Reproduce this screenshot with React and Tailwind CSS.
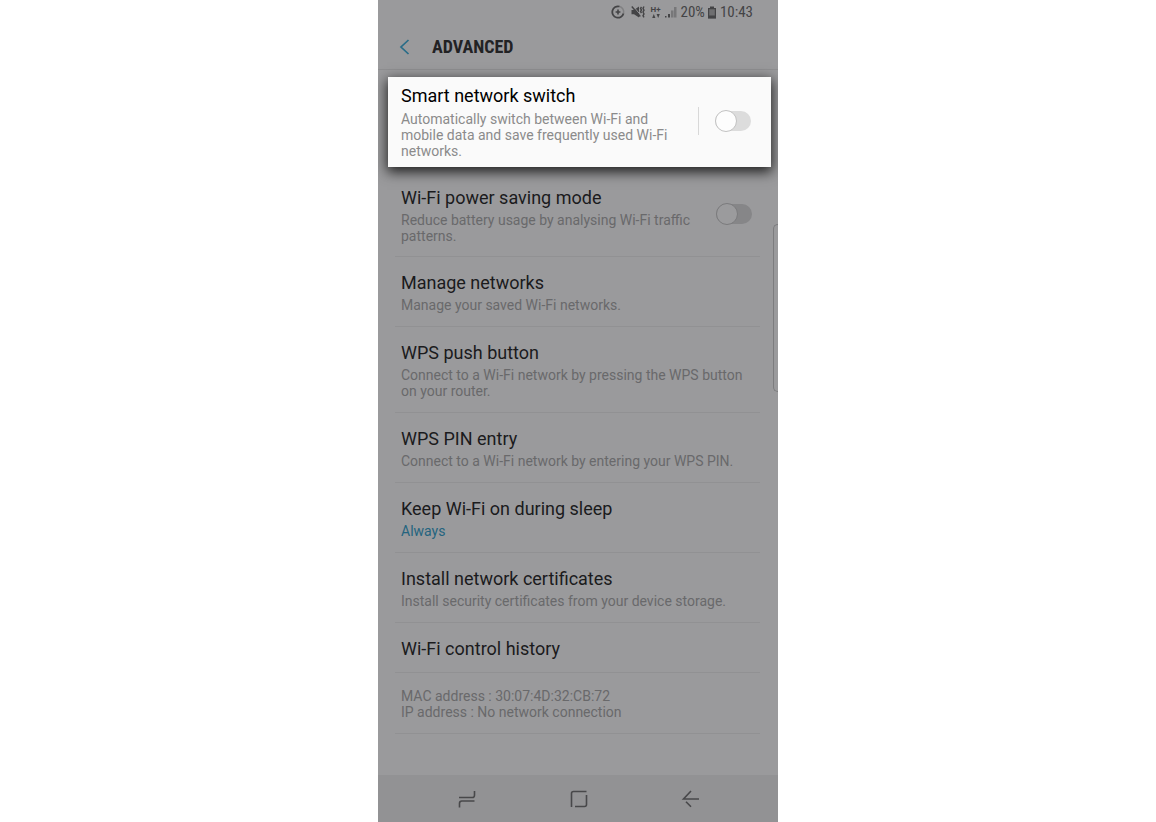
import { useState } from "react";

const settings = [
  { title: "Manage networks", text: "Manage your saved Wi-Fi networks." },
  {
    title: "WPS push button",
    text: "Connect to a Wi-Fi network by pressing the WPS button on your router.",
  },
  {
    title: "WPS PIN entry",
    text: "Connect to a Wi-Fi network by entering your WPS PIN.",
  },
  { title: "Keep Wi-Fi on during sleep", text: "Always", active: true },
  {
    title: "Install network certificates",
    text: "Install security certificates from your device storage.",
  },
  { title: "Wi-Fi control history" },
];

function StatusBar() {
  return (
    <div className="flex h-6 items-center justify-end pr-[25px] font-['Roboto_Condensed','Liberation_Sans_Narrow',Roboto,sans-serif] text-[15px] leading-6 text-[#444446]">
      <svg width="14" height="14" viewBox="0 0 14 14" fill="none" stroke="currentColor">
        <path d="M8.5 1.5A5.7 5.7 0 1 0 12.5 8.5" strokeWidth="1.8" />
        <path d="M8.5 1.5A5.7 5.7 0 0 1 12.5 8.5" strokeWidth="1.5" opacity="0.3" />
        <path d="M7 4.600v4.800M4.600 7h4.800" strokeWidth="1.6" />
      </svg>
      <svg className="ml-1.5" width="14" height="14" viewBox="0 0 14 14" fill="none" stroke="currentColor">
        <path d="M0.5 5H3L8 1.500v11L3 9.200H0.500z" fill="currentColor" stroke="none" />
        <path d="M2 1l8 9.500" stroke="#9a9a9c" strokeWidth="1" />
        <path d="M0.800 1.500l8.500 10" strokeWidth="1.4" />
        <path d="M10.500 2l-1 1.500 1 1.500-1 1.500 1 1.500M13 1.500l-1 1.800 1 1.900-1 1.800 1 1.900-1 1.800 1 1.600" strokeWidth="1.4" />
      </svg>
      <div className="ml-1.5 flex flex-col items-center gap-px font-['Roboto',sans-serif] text-[8px] leading-[7px] font-bold">
        <span>H+</span>
        <svg width="8" height="4" viewBox="0 0 8 4" fill="currentColor">
          <path d="M0.200 4L1.800 0l1.600 4zM4.600 0h3.200L6.200 4z" />
        </svg>
      </div>
      <svg className="ml-1" width="12" height="12" viewBox="0 0 12 12" fill="currentColor">
        <path d="M0 10h1.500v1.500H0zM3 8h2v3.500H3z" />
        <path d="M6 4.500h2.500v7H6zM9 1h2.500v10.500H9z" opacity="0.4" />
      </svg>
      <span className="ml-1">20%</span>
      <svg className="ml-0.5" width="10" height="13" viewBox="0 0 10 13" fill="currentColor">
        <path d="M3 0.500h4v1.500H3z" />
        <path d="M1 2h8v10.500H1z" opacity="0.5" />
        <path d="M1 2h1.200v10.500H1zM7.800 2H9v10.500H7.800zM1 2h8v1.200H1zM1 9.500h8v3H1z" />
      </svg>
      <span className="ml-[3px]">10:43</span>
    </div>
  );
}

function Toggle({ id, dim }) {
  const [on, setOn] = useState(false);
  return (
    <input
      id={id}
      type="checkbox"
      role="switch"
      checked={on}
      onChange={() => setOn(!on)}
      className={`relative h-5 w-9 shrink-0 appearance-none rounded-full before:absolute before:-top-px before:left-0 before:size-[22px] before:rounded-full before:border checked:before:left-[14px] ${
        dim
          ? "bg-[#868688] before:border-[#7b7b7d] before:bg-[#9b9b9d]"
          : "bg-[#dcdcdc] before:border-[#c2c2c2] before:bg-[#fdfdfd]"
      }`}
    />
  );
}

function NavBar() {
  return (
    <nav className="flex h-[47px] items-center justify-center gap-[88px] bg-[#929294] pt-px pl-0.5 text-[#48484a]">
      <button aria-label="Recent apps">
        <svg width="24" height="24" viewBox="0 0 24 24" fill="none" stroke="currentColor" strokeWidth="1.6">
          <path d="M4 10.500h13.200q2.300 0 2.300-2.300V4M19.500 14H6.800q-2.300 0-2.300 2.300V20.500" />
        </svg>
      </button>
      <button aria-label="Home">
        <svg width="24" height="24" viewBox="0 0 24 24" fill="none" stroke="currentColor" strokeWidth="1.6">
          <path d="M4.500 20V6.500q0-2 2-2H19.500M19.500 8v9.500q0 2-2 2H8" />
        </svg>
      </button>
      <button aria-label="Back">
        <svg width="24" height="24" viewBox="0 0 24 24" fill="none" stroke="currentColor" strokeWidth="1.6">
          <path d="M12 4L4.500 12H20M7 14.800L12 19.800" />
        </svg>
      </button>
    </nav>
  );
}

export default function App() {
  return (
    <div className="min-h-screen bg-white font-['Roboto',sans-serif]">
      <div className="relative mx-auto flex min-h-screen w-full max-w-[400px] flex-col overflow-hidden bg-[#9a9a9c]">
        <StatusBar />

        <header className="flex h-[46px] items-center border-b border-[#8f8f91] pl-5">
          <button aria-label="Navigate up" className="text-[#286c88]">
            <svg width="14" height="18" viewBox="0 0 14 18" fill="none" stroke="currentColor" strokeWidth="1.7">
              <path d="M10.500 2L3 9l7.500 7" />
            </svg>
          </button>
          <h1 className="ml-5 font-['Roboto_Condensed','Liberation_Sans_Narrow',Roboto,sans-serif] text-lg font-bold text-[#222224]">
            ADVANCED
          </h1>
        </header>

        <main className="flex-1">
          <section className="mt-[7px] mr-[7px] ml-[10px] flex items-center bg-[#fafafa] pt-[6px] pr-5 pb-2 pl-[13px] shadow-[0_4px_12px_1px_rgba(0,0,0,0.8)]">
            <label htmlFor="smart-switch" className="flex-1">
              <span className="block text-lg leading-[26px] text-black">Smart network switch</span>
              <span className="block pt-0.5 text-sm leading-4 text-[#8b8b8b]">
                Automatically switch between Wi-Fi and mobile data and save frequently used Wi-Fi networks.
              </span>
            </label>
            <div className="mr-4 ml-3 h-7 w-px bg-[#d8d8d8]" />
            <Toggle id="smart-switch" />
          </section>

          <ul className="mt-[5px] mr-[18px] ml-[17px]">
            <li className="flex items-center border-b border-[#919193] py-3 pr-2 pl-[6px]">
              <label htmlFor="power-saving" className="flex-1 pr-5">
                <span className="block text-lg leading-7 text-[#1b1b1d]">Wi-Fi power saving mode</span>
                <span className="block text-sm leading-4 text-[#69696b]">
                  Reduce battery usage by analysing Wi-Fi traffic patterns.
                </span>
              </label>
              <Toggle id="power-saving" dim />
            </li>
            {settings.map((item) => (
              <li key={item.title} className="border-b border-[#919193]">
                <button
                  className={`block w-full pt-3 pr-2 pl-[6px] text-left ${item.text ? "pb-[13px]" : "pb-[9px]"}`}
                >
                  <span className="block text-lg leading-7 text-[#1b1b1d]">{item.title}</span>
                  {item.text && (
                    <span className={`block text-sm leading-4 ${item.active ? "text-[#24647f]" : "text-[#69696b]"}`}>
                      {item.text}
                    </span>
                  )}
                </button>
              </li>
            ))}
            <li className="border-b border-[#919193] pt-[15px] pb-[13px] pl-[6px] text-sm leading-4 text-[#69696b]">
              <p>MAC address : 30:07:4D:32:CB:72</p>
              <p>IP address : No network connection</p>
            </li>
          </ul>
        </main>

        <NavBar />

        {/* edge panel handle */}
        <div className="absolute top-56 right-0 h-[168px] w-[5px] rounded-l-md border border-r-0 border-[#7c7c7e]" />
      </div>
    </div>
  );
}
